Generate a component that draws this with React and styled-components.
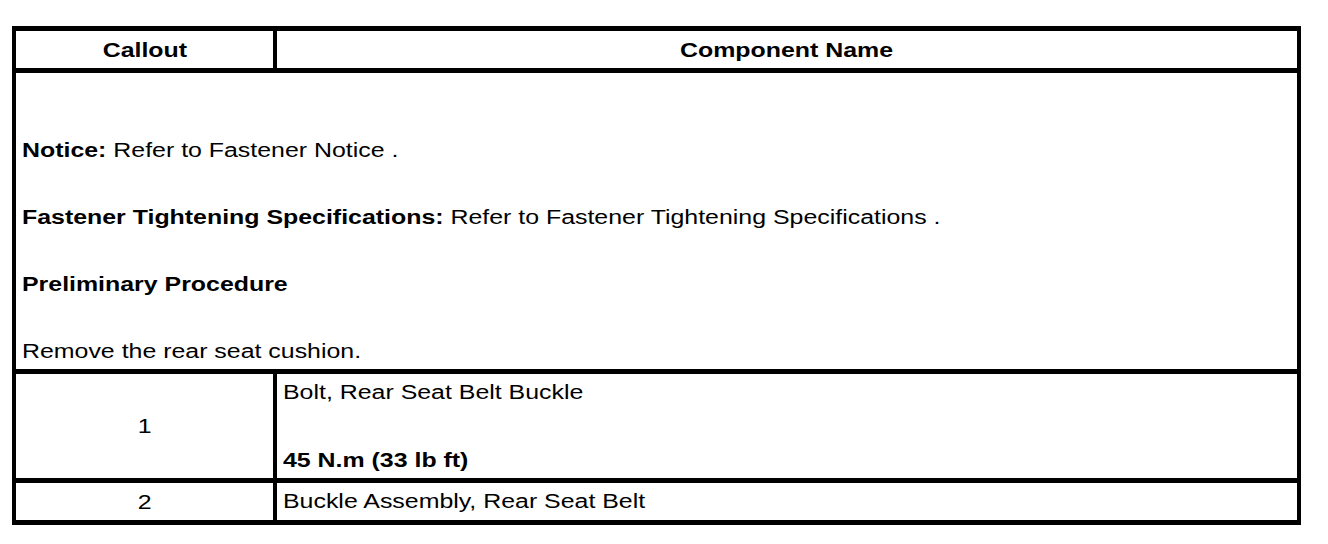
import React from "react";
import styled, { createGlobalStyle } from "styled-components";

const Global = createGlobalStyle`
  html, body {
    margin: 0;
    padding: 0;
    background: #ffffff;
  }
  body {
    font-family: "Liberation Sans", Arial, sans-serif;
    color: #000000;
  }
`;

const Page = styled.div`
  padding: 26px 0 0 12px;
`;

const Table = styled.div`
  display: grid;
  grid-template-columns: 257px 1020px;
  grid-template-rows: 37px 296px 104px 37px;
  column-gap: 4px;
  row-gap: 5px;
  padding: 5px 4px;
  width: 1289px;
  box-sizing: border-box;
  background: #000000;
`;

const Cell = styled.div`
  background: #ffffff;
  display: flex;
  flex-direction: column;
  justify-content: ${(p) => (p.$center ? "center" : "flex-start")};
  align-items: ${(p) => (p.$center ? "center" : "flex-start")};
  grid-column: ${(p) => (p.$span ? "1 / span 2" : "auto")};
  padding: ${(p) => p.$pad || "0"};
  gap: ${(p) => p.$gap || "0"};
  box-sizing: border-box;
  font-size: 20px;
  line-height: 24px;
  font-weight: ${(p) => (p.$head ? 700 : 400)};
  overflow: visible;
  white-space: nowrap;
`;

const Wide = styled.span`
  display: inline-block;
  transform: scaleX(1.245);
  transform-origin: ${(p) => (p.$center ? "center" : "left")} center;
`;

const B = styled.b`
  font-weight: 700;
`;

export default function App() {
  return (
    <>
      <Global />
      <Page>
        <Table>
          <Cell $center $head>
            <Wide $center>Callout</Wide>
          </Cell>
          <Cell $center $head>
            <Wide $center>Component Name</Wide>
          </Cell>

          <Cell $span $pad="65px 6px 5px 6px" $gap="43px">
            <Wide>
              <B>Notice:</B> Refer to Fastener Notice .
            </Wide>
            <Wide>
              <B>Fastener Tightening Specifications:</B> Refer to Fastener
              Tightening Specifications .
            </Wide>
            <Wide>
              <B>Preliminary Procedure</B>
            </Wide>
            <Wide>Remove the rear seat cushion.</Wide>
          </Cell>

          <Cell $center>
            <Wide $center>1</Wide>
          </Cell>
          <Cell $pad="6px 6px 6px 6px" $gap="44px">
            <Wide>Bolt, Rear Seat Belt Buckle</Wide>
            <Wide>
              <B>45 N.m (33 lb ft)</B>
            </Wide>
          </Cell>

          <Cell $center>
            <Wide $center>2</Wide>
          </Cell>
          <Cell $pad="6px 6px 6px 6px">
            <Wide>Buckle Assembly, Rear Seat Belt</Wide>
          </Cell>
        </Table>
      </Page>
    </>
  );
}
